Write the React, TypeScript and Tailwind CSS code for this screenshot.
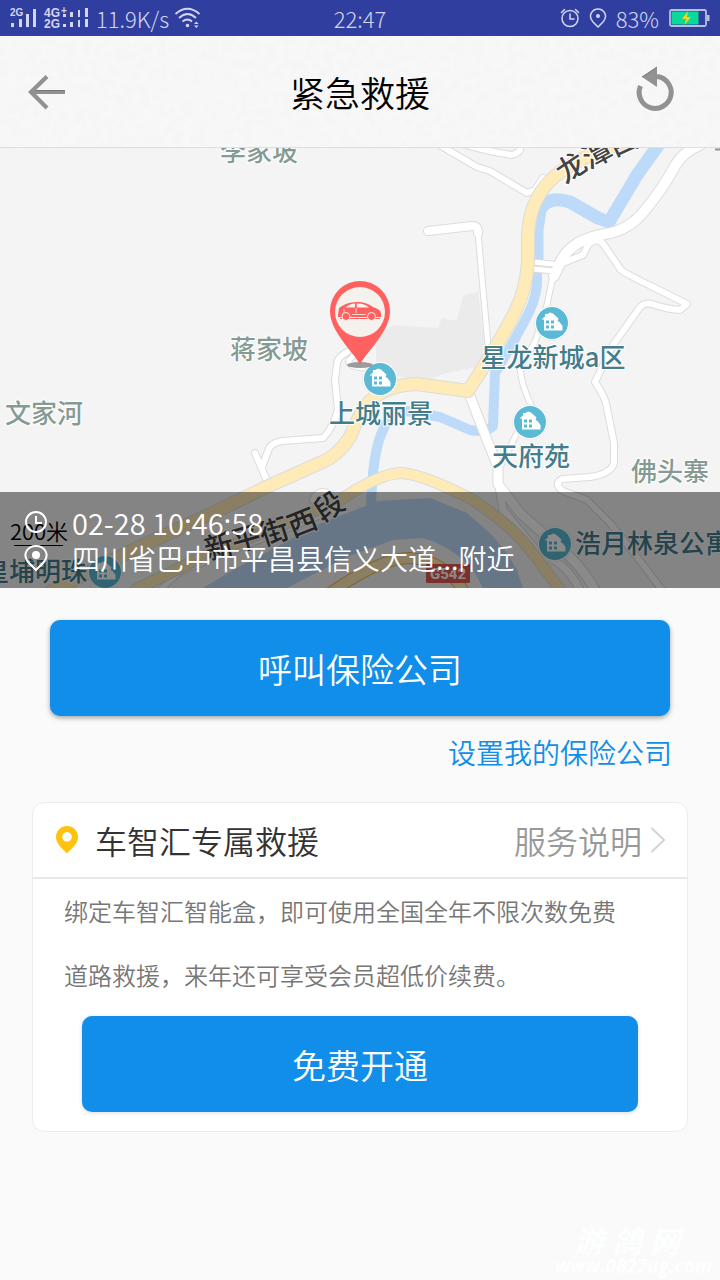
import React from "react";

type Road = { d: string; w: number };

const whiteRoads: Road[] = [
  { d: "M436 143 L477 167 L490 171 L527 193 L535 190 L543 178", w: 6 },
  { d: "M463 144 Q490 152 512 155 Q522 152 520 146", w: 6 },
  { d: "M428 231 L472 226 Q478 225 478 233", w: 8 },
  { d: "M478 232 L482 278 L488 345", w: 5 },
  { d: "M533 262 L562 265", w: 5 },
  { d: "M533 269 L555 271", w: 5 },
  { d: "M563 263 L583 255 L588 245 Q598 236 604 245 L621 270 Q626 274 653 287 L687 304 L680 310 Q665 309 652 304 Q643 302 638 310 L613 345 L595 382 Q606 398 607 408 L614 443 V463 Q611 474 590 477 L562 479 Q553 484 563 491 L587 500 L610 523 L637 557 L662 590", w: 6 },
  { d: "M553 276 L547 305 L535 342 L520 367 Q521 385 532 407 L515 437 L500 467", w: 5 },
  { d: "M700 145 Q683 152 675 166 Q662 190 645 210 Q630 230 605 234 Q570 240 560 263 L554 276", w: 10 },
  { d: "M498 480 L503 510 L540 555 Q565 560 580 590", w: 7 },
  { d: "M470 396 L487 440 L498 467 V484 L520 513 L547 537 Q580 562 595 590", w: 9 },
  { d: "M363 368 Q347 366 349 360 L358 352", w: 5 },
  { d: "M347 352 Q337 358 337 364 L335 380 L338 410 Q332 430 323 438 L282 441 Q270 443 268 451 L262 467", w: 6 },
  { d: "M255 453 L268 483", w: 6 },
  { d: "M313 500 Q318 488 330 494 L332 504", w: 6 },
  { d: "M160 590 L180 572 L340 508", w: 5 },
];

const yellowRoads: Road[] = [
  { d: "M640 138 Q592 150 560 172 Q528 196 528 238 V262 Q526 290 515 312 Q500 342 468 391 L417 384 Q387 385 370 401 Q362 408 350 437 Q338 456 320 463 L262 489 L217 511 L133 550 L50 592", w: 12 },
  { d: "M135 590 L200 558 L280 526 L340 500 Q380 473 402 473 Q425 475 473 500 Q513 526 535 556 L562 592", w: 10 },
];

const labels = [
  { t: "李家坡", x: 259, y: 161, c: "#869a94" },
  { t: "蒋家坡", x: 269, y: 359, c: "#869a94" },
  { t: "文家河", x: 44, y: 423, c: "#869a94" },
  { t: "佛头寨", x: 670, y: 481, c: "#869a94" },
  { t: "上城丽景", x: 381, y: 423, c: "#437d8c" },
  { t: "星龙新城a区", x: 553, y: 367, c: "#437d8c" },
  { t: "天府苑", x: 531, y: 466, c: "#437d8c" },
  { t: "浩月林泉公寓", x: 653, y: 553, c: "#437d8c" },
  { t: "皇埔明珠", x: 35, y: 581, c: "#437d8c" },
];

const houses = [
  [380, 379],
  [552, 323],
  [530, 422],
  [555, 544],
  [105, 572],
];

const streetLetters = [
  { t: "新", x: 219, y: 546, r: -14 },
  { t: "平", x: 246, y: 538, r: -16 },
  { t: "街", x: 274, y: 531, r: -18 },
  { t: "西", x: 302, y: 522, r: -22 },
  { t: "段", x: 329, y: 506, r: -34 },
  { t: "龙", x: 571, y: 167, r: -34 },
  { t: "潭", x: 597, y: 153, r: -28 },
  { t: "西", x: 623, y: 141, r: -25 },
];

function MapDrawing() {
  return (
    <svg
      viewBox="0 148 720 440"
      preserveAspectRatio="xMidYMid slice"
      className="block h-110 w-full"
      role="img"
      aria-label="地图"
    >
      <rect x="0" y="148" width="720" height="440" fill="#f4f4f4" />
      <path
        d="M376 340 L393 325 L438 328 L442 318 L457 321 L463 296 L478 292 L487 365 L447 373 L427 380 L400 377 L376 360Z"
        fill="#ebebeb"
      />
      <g fill="none" stroke="#bddbf9" strokeLinejoin="round">
        <path d="M662 140 L637 175 L609 222 L598 218 L570 202 Q548 195 540 210 L537 230 V270" strokeWidth="13" />
        <path d="M537 222 V285 Q535 303 524 322 L512 344 L495 373 L493 426 Q486 433 470 430 L440 417 L407 411 Q389 413 384 428 Q372 450 371 510" strokeWidth="10" />
      </g>
      <path
        d="M363 507 L377 501 L430 498 L467 513 L490 533 L507 553 L517 570 L523 588 H483 L473 570 Q455 548 423 538 L393 540 L347 557 L287 588 H203 L233 570 L280 545 L317 525Z"
        fill="#bddbf9"
      />
      <g fill="none" strokeLinecap="round" strokeLinejoin="round">
        {whiteRoads.map((r) => (
          <path key={r.d} d={r.d} stroke="#dcdcdc" strokeWidth={r.w + 2} />
        ))}
        {whiteRoads.map((r) => (
          <path key={r.d} d={r.d} stroke="#ffffff" strokeWidth={r.w} />
        ))}
        {yellowRoads.map((r) => (
          <path key={r.d} d={r.d} stroke="#dcdcd8" strokeWidth={r.w + 2} />
        ))}
        {yellowRoads.map((r) => (
          <path key={r.d} d={r.d} stroke="#ffebb8" strokeWidth={r.w} />
        ))}
        <path d="M330 593 Q380 558 410 558 Q445 560 465 593" stroke="#e8b84a" strokeWidth="12" />
        <path d="M330 593 Q380 558 410 558 Q445 560 465 593" stroke="#ffebb8" strokeWidth="10" />
      </g>
      <rect x="426" y="564" width="44" height="19" rx="1" fill="#e35a50" />
      <text x="448" y="579" textAnchor="middle" fontSize="15" fontWeight="700" fill="#fff" fontFamily="Roboto, sans-serif">
        G542
      </text>
      <g fontSize="29" fontWeight="500" fill="#444" stroke="#fff" strokeWidth="2" paintOrder="stroke" textAnchor="middle">
        {streetLetters.map((s) => (
          <text key={s.t + s.x} x={s.x} y={s.y + 11} transform={`rotate(${s.r} ${s.x} ${s.y})`}>
            {s.t}
          </text>
        ))}
      </g>
      {houses.map(([x, y]) => (
        <g key={x} transform={`translate(${x} ${y})`}>
          <circle r="17.5" fill="#fff" stroke="#e2e2e2" strokeWidth="0.6" />
          <circle r="16" fill="#5ab9d4" />
          <path d="M-10.500 -3.500 L-7 -6.500 V-9 H-4.500 L-2 -10.500 L1 -9.500 L6.500 -4.500 L5.500 -2 L7.500 -1 L10.500 3 V7.500 H-8 V-3.500Z" fill="#fff" />
          <path d="M-6 -2.500h3v3h-3z M-1 -2.500h3v3h-3z M-6 2.500h3v3h-3z M-1 2.500h3v3h-3z" fill="#5ab9d4" />
        </g>
      ))}
      <g fontSize="26" fontWeight="500" stroke="#fff" strokeWidth="2" strokeLinejoin="round" paintOrder="stroke" textAnchor="middle">
        {labels.map((l) => (
          <text key={l.t} x={l.x} y={l.y} fill={l.c}>
            {l.t}
          </text>
        ))}
      </g>
      <path d="M715 149.500 H720" stroke="#869a94" strokeWidth="2" />
      <ellipse cx="360" cy="365" rx="13" ry="3" fill="#9b9b9b" />
      <path d="M360 364.500 C353 351 330 332 330 311 A30 30 0 0 1 390 311 C390 332 367 351 360 364.500Z" fill="#ff6060" />
      <circle cx="360" cy="312" r="25" fill="#f5f2ee" />
      <g fill="#ff6060">
        <path d="M338 315 L339 308 L342 306 Q348 302 358 302 Q366 302 373 307 Q380 309 381 313 V317 H338Z" />
        <path d="M340 318 H380 V319 H340Z" />
        <circle cx="346" cy="316.500" r="4" stroke="#f5f2ee" />
        <circle cx="371.500" cy="316.500" r="4" stroke="#f5f2ee" />
      </g>
      <path d="M346 307 Q350 303.500 355 303.500 V307.500 H345Z M356.500 303.500 Q364 303 369 307.500 H357Z" fill="#f5f2ee" />
      <path d="M344 309 V313 M356 308 V313 M352 314.500 H366" stroke="#f5f2ee" strokeWidth="0.8" />
      <text x="39" y="540" fontSize="22" fill="#000" textAnchor="middle">
        200米
      </text>
      <path d="M14 545.500 H63" stroke="#000" />
    </svg>
  );
}

function StatusBar() {
  return (
    <div className="grid h-9 grid-cols-3 items-center bg-[#303f9f] px-2.5 text-[22px] leading-9 font-light text-[#d3d6f0]">
      <div className="flex items-center gap-1.5">
        <svg width="80" height="24" viewBox="10 6 80 24" fill="#d3d6f0" fontFamily="Liberation Sans, sans-serif" fontWeight="700" aria-hidden="true">
          <text x="10" y="16" fontSize="10">2G</text>
          <path d="M11 23h3v4h-3z M19 19h3v8h-3z M26 14h3v13h-3z M33 9h3v18h-3z" />
          <text x="44" y="17" fontSize="12">4G</text>
          <text x="61" y="14" fontSize="10">+</text>
          <text x="44" y="28" fontSize="12">2G</text>
          <path d="M63 14h3v3h-3z M63 24h3v3h-3z M70 12h3v5h-3z M70 22h3v5h-3z M78 10h2v7h-2z M78 20h2v7h-2z M85 8h3v9h-3z M85 19h3v8h-3z" />
        </svg>
        <span>11.9K/s</span>
        <svg width="26" height="22" viewBox="174 7 26 22" fill="none" stroke="#d3d6f0" strokeWidth="1.800" aria-hidden="true">
          <path d="M174.500 14 Q186.500 3.500 198.500 14 M178 18 Q186.500 10 195 18 M181.500 21.500 Q186.500 17.500 191 21.500" />
          <circle cx="186.500" cy="25.500" r="1.800" fill="#d3d6f0" stroke="none" />
          <path d="M193 24 L195.300 21.500 L197.600 24Z M193 25.500 L195.300 28 L197.600 25.500Z" fill="#d3d6f0" stroke="none" />
        </svg>
      </div>
      <div className="text-center">22:47</div>
      <div className="flex items-center justify-end gap-[9px]">
        <svg width="20" height="20" viewBox="0 0 20 20" fill="none" stroke="#d3d6f0" strokeWidth="1.500" strokeLinecap="round" aria-hidden="true">
          <circle cx="10" cy="10.500" r="8" />
          <path d="M10 6v5h4 M1.500 4.500 L4.500 1.500 M18.500 4.500 L15.500 1.500" />
        </svg>
        <svg width="18" height="20" viewBox="0 0 18 20" fill="none" stroke="#d3d6f0" strokeWidth="1.500" aria-hidden="true">
          <path d="M9 19 L4 14 C-2 7 4 1 9 1 S20 7 14 14Z" />
          <circle cx="9" cy="8" r="2" fill="#d3d6f0" stroke="none" />
        </svg>
        <span>83%</span>
        <svg width="42" height="18" viewBox="0 0 42 18" aria-hidden="true">
          <rect x="2" y="1" width="36" height="16" rx="1.500" fill="none" stroke="#b9bde0" strokeWidth="1.800" />
          <rect x="3.500" y="2.500" width="27" height="13" fill="#09d99a" />
          <path d="M39 6h2.500v6h-2.500z" fill="#b9bde0" />
          <path d="M20 2 L14 10 H18 L16.500 16 L23 8 H19Z" fill="#f5d21f" />
        </svg>
      </div>
    </div>
  );
}

function TopBar() {
  return (
    <header className="relative grid h-28 grid-cols-[1fr_auto_1fr] items-center border-b border-[#dedede] bg-[#f8f8f8] px-7">
      <svg className="absolute inset-0 size-full" aria-hidden="true">
        <filter id="paper">
          <feTurbulence type="fractalNoise" baseFrequency="0.12" numOctaves="3" />
          <feColorMatrix values="0 0 0 0 0.500  0 0 0 0 0.500  0 0 0 0 0.500  0.100 0 0 0 -0.030" />
        </filter>
        <rect width="100%" height="100%" filter="url(#paper)" />
      </svg>
      <button type="button" aria-label="返回" className="relative justify-self-start">
        <svg width="38" height="36" viewBox="28 73 38 36" fill="none" stroke="#919191" aria-hidden="true">
          <path d="M47 75.500 L31 91 L47 107" strokeWidth="4.200" />
          <path d="M32 91 H65" strokeWidth="4.200" />
          <path d="M36 89.500 H65" stroke="#757575" strokeWidth="1" />
        </svg>
      </button>
      <h1 className="relative text-[35px] leading-10 text-black">紧急救援</h1>
      <button type="button" aria-label="刷新" className="relative mr-[17px] justify-self-end">
        <svg width="40" height="46" viewBox="635 69 40 46" fill="none" overflow="visible" aria-hidden="true">
          <path d="M640.500 86 A16 16 0 1 0 657 76.500" stroke="#929292" strokeWidth="5" />
          <path d="M657 67 V87 L642 77Z" fill="#929292" />
          <path d="M642 77 L657 67" stroke="#777" strokeWidth="1" />
        </svg>
      </button>
    </header>
  );
}

const solidButton =
  "block h-24 w-full rounded-[10px] bg-[#108ee9] text-[34px] text-white";

export default function App() {
  return (
    <div className="flex min-h-screen flex-col bg-[#fafafa] font-['Noto_Sans_CJK_SC',sans-serif] font-[350]">
      <StatusBar />
      <TopBar />
      <section className="relative">
        <MapDrawing />
        <div className="absolute inset-x-0 bottom-0 flex h-24 flex-col justify-center bg-black/46 px-6 text-[28px] leading-9 text-white">
          <div className="flex items-center gap-6">
            <svg width="24" height="24" viewBox="0 0 24 24" fill="none" stroke="#fff" strokeWidth="2" aria-hidden="true">
              <circle cx="12" cy="12" r="10" />
              <path d="M12 6v7h6" />
            </svg>
            <time className="text-[29px] leading-9">02-28 10:46:58</time>
          </div>
          <div className="flex items-center gap-6">
            <svg width="24" height="26" viewBox="0 0 24 26" fill="none" stroke="#fff" strokeWidth="2" aria-hidden="true">
              <path d="M12 25 L5 18 C-3 9 4 1 12 1 S27 9 19 18Z" />
              <circle cx="12" cy="10" r="4" fill="#fff" stroke="none" />
            </svg>
            <span>四川省巴中市平昌县信义大道...附近</span>
          </div>
        </div>
      </section>

      <main className="flex flex-col px-8 pt-8">
        <div className="px-[18px]">
          <button type="button" className={`${solidButton} shadow-[0_2px_5px_rgba(0,0,0,0.35)]`}>
            呼叫保险公司
          </button>
        </div>
        <a href="#insurer" className="mt-4 self-end pr-4 text-[28px] leading-10 text-[#108ee9]">
          设置我的保险公司
        </a>
        <section className="mt-[30px] rounded-xl border border-[#ececec] bg-white pb-[19px]">
          <div className="flex h-[76px] items-center justify-between border-b-2 border-[#e8e8e8] pr-[21px] pl-[23px] text-[32px] leading-10">
            <h2 className="flex items-center gap-[17px] text-[#333]">
              <svg width="22" height="28" viewBox="0 0 22 28" aria-hidden="true">
                <path
                  fillRule="evenodd"
                  d="M11 27.500 C7 23 0 18 0 11 A11 11 0 0 1 22 11 C22 18 15 23 11 27.500Z M11 6 a4.800 4.800 0 1 0 0.010 0Z"
                  fill="#ffc20e"
                />
              </svg>
              车智汇专属救援
            </h2>
            <a href="#service" className="flex items-center gap-2 text-[#999]">
              服务说明
              <svg width="16" height="28" viewBox="0 0 16 28" fill="none" stroke="#d4d4d4" strokeWidth="2" aria-hidden="true">
                <path d="M1.500 2 L14 14 L1.500 26" />
              </svg>
            </a>
          </div>
          <p className="px-[31px] text-[24px] leading-16 text-[#777]">
            绑定车智汇智能盒，即可使用全国全年不限次数免费
            <br />
            道路救援，来年还可享受会员超低价续费。
          </p>
          <div className="px-[49px] pt-[9px]">
            <button type="button" className={`${solidButton} shadow-[0_1px_4px_rgba(0,0,0,0.15)]`}>
              免费开通
            </button>
          </div>
        </section>
      </main>

      <footer className="mt-auto flex flex-col items-end pr-2 pb-1 font-bold text-[#fdffff] italic">
        <div className="flex gap-2 pr-8 text-[30px] leading-8">
          <span>游</span>
          <span>鸽</span>
          <span>网</span>
        </div>
        <div className="font-['Open_Sans',sans-serif] text-[19px] leading-5">www.0827ug.com</div>
      </footer>
    </div>
  );
}
